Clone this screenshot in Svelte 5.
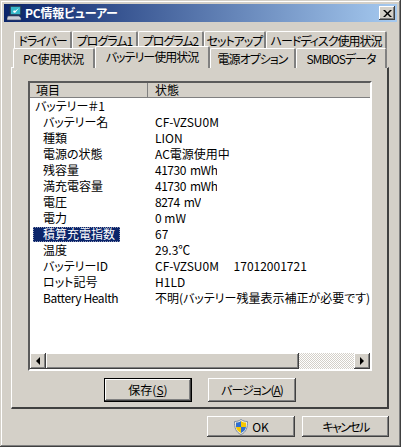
<script>
	const topTabs = ['ドライバー', 'プログラム1', 'プログラム2', 'セットアップ', 'ハードディスク使用状況'];
	const bottomTabs = ['PC使用状況', 'バッテリー使用状況', '電源オプション', 'SMBIOSデータ'];

	const rows = [
		{ name: 'バッテリー＃1', value: '', top: true },
		{ name: 'バッテリー名', value: 'CF-VZSU0M' },
		{ name: '種類', value: 'LION' },
		{ name: '電源の状態', value: 'AC電源使用中' },
		{ name: '残容量', value: '41730 mWh', tight: true },
		{ name: '満充電容量', value: '41730 mWh', tight: true },
		{ name: '電圧', value: '8274 mV', tight: true },
		{ name: '電力', value: '0 mW' },
		{ name: '積算充電指数', value: '67', selected: true },
		{ name: '温度', value: '29.3℃' },
		{ name: 'バッテリーID', value: 'CF-VZSU0M　 17012001721' },
		{ name: 'ロット記号', value: 'H1LD' },
		{ name: 'Battery Health', value: '不明(バッテリー残量表示補正が必要です)', latin: true }
	];
</script>

<div class="window">
	<header class="titlebar">
		<svg class="appicon" viewBox="0 0 15 16" width="15" height="16">
			<path d="M3 1h11v9H3z" fill="#2f6f8f" stroke="#203048" />
			<path d="M4 2h9v7H4z" fill="#35b6c8" />
			<path d="M6 7l2 1 4-5-4 3-1-1z" fill="#fff" />
			<path d="M1 11h11l2 2v2H0v-2z" fill="#c8ccd8" stroke="#404860" stroke-width="0.6" />
		</svg>
		<span class="title">PC情報ビューアー</span>
		<button class="close" aria-label="閉じる">
			<svg viewBox="0 0 9 7" width="9" height="7"><path d="M0 0h2l2.500 2.500L7 0h2L5.500 3.500 9 7H7L4.500 4.500 2 7H0l3.500-3.500z" /></svg>
		</button>
	</header>

	<div class="client">
		<div class="tabs top">
			{#each topTabs as tab}
				<div class="tab">{tab}</div>
			{/each}
		</div>
		<div class="tabs bottom">
			{#each bottomTabs as tab, i}
				<div class="tab" class:active={i === 1} class:pc={i === 0}>{tab}</div>
			{/each}
		</div>

		<section class="panel">
			<div class="list">
				<div class="head">
					<div class="hcell first">項目</div>
					<div class="hcell second">状態</div>
				</div>
				<div class="rows">
					{#each rows as row}
						<div class="row">
							<div class="name" class:top={row.top} class:latin={row.latin}>
								<span class:selected={row.selected}>{row.name}</span>
							</div>
							<div class="value" class:tight={row.tight}>{row.value}</div>
						</div>
					{/each}
				</div>
				<div class="scrollbar">
					<div class="sbtn"><i class="arrow left"></i></div>
					<div class="thumb"></div>
					<div class="track"></div>
					<div class="sbtn"><i class="arrow right"></i></div>
				</div>
			</div>
			<div class="actions">
				<button class="btn default"><span>保存(<u>S</u>)</span></button>
				<button class="btn narrow"><span>バージョン(<u>A</u>)</span></button>
			</div>
		</section>

		<footer class="footer">
			<button class="btn small">
				<svg viewBox="0 0 16 16" width="16" height="16">
					<path d="M8 .5C6 2 4 2.500 1.500 2.500c0 6 1 10.500 6.500 13 5.500-2.500 6.500-7 6.500-13C12 2.500 10 2 8 .5z" fill="#f4f0e0" stroke="#7a8aa0" />
					<path d="M8 2C6.500 3 5 3.500 3 3.600V8h5z" fill="#2f6fd0" />
					<path d="M8 2c1.500 1 3 1.500 5 1.600V8H8z" fill="#f5c800" />
					<path d="M3 8h5v6C5 12.500 3.400 10.500 3 8z" fill="#f5c800" />
					<path d="M13 8H8v6c3-1.500 4.600-3.500 5-6z" fill="#2f6fd0" />
				</svg>
				<span>OK</span>
			</button>
			<button class="btn small cancel"><span>キャンセル</span></button>
		</footer>
	</div>
</div>

<style>
	:global(body) {
		margin: 0;
		background: #d4d0c8;
	}
	.window {
		box-sizing: border-box;
		width: 401px;
		height: 447px;
		padding: 4px;
		background: #d4d0c8;
		box-shadow: inset -1px -1px #404040, inset 1px 1px #d4d0c8, inset -2px -2px #808080, inset 2px 2px #fff;
		font: 12px/16px "Noto Sans CJK JP", "Liberation Sans", sans-serif;
		font-feature-settings: "palt";
		color: #000;
	}
	.titlebar {
		display: flex;
		align-items: center;
		height: 18px;
		background: linear-gradient(90deg, #0a246a, #a6caf0);
		color: #fff;
	}
	.appicon {
		margin-left: 3px;
		margin-right: 3px;
	}
	.title {
		font-weight: 700;
		letter-spacing: -0.2px;
		flex: 1;
	}
	.close {
		display: flex;
		align-items: center;
		justify-content: center;
		box-sizing: border-box;
		width: 16px;
		height: 14px;
		margin-right: 2px;
		padding: 0;
		border: 0;
		background: #d4d0c8;
		box-shadow: inset -1px -1px #404040, inset 1px 1px #fff, inset -2px -2px #808080;
	}
	.client {
		padding: 9px 8px 0 7px;
	}
	.tabs {
		display: grid;
		position: relative;
	}
	.top {
		grid-template-columns: 58px 66px 66px 62px 121px;
		height: 17px;
		padding-left: 3px;
	}
	.top .tab {
		padding-top: 1px;
	}
	.bottom {
		grid-template-columns: 82px 115px 86px 91px;
		height: 19px;
		padding-left: 2px;
	}
	.tab {
		box-sizing: border-box;
		text-align: center;
		padding-top: 2px;
		white-space: nowrap;
		letter-spacing: -1px;
		background: #d4d0c8;
		border-top: 1px solid #fff;
		border-left: 1px solid #fff;
		border-right: 2px solid #808080;
		border-radius: 2px 2px 0 0;
	}
	.pc {
		letter-spacing: -0.4px;
	}
	.active {
		position: relative;
		z-index: 1;
		height: 22px;
		margin-top: -2px;
		border-right-color: #808080;
	}
	.panel {
		box-sizing: border-box;
		height: 342px;
		padding: 13px 15px 0 16px;
		border-top: 1px solid #fff;
		border-left: 1px solid #fff;
		border-right: 2px solid #404040;
		border-bottom: 2px solid #404040;
	}
	.list {
		box-sizing: border-box;
		height: 290px;
		display: flex;
		flex-direction: column;
		border: 2px solid;
		border-color: #5a5a5a #fff #fff #5a5a5a;
		background: #fff;
	}
	.head {
		display: flex;
		height: 15px;
		line-height: 14px;
		background: #d4d0c8;
		flex: none;
	}
	.hcell {
		box-sizing: border-box;
		padding-left: 6px;
		border-right: 1px solid #808080;
		box-shadow: inset 0 -1px #808080;
	}
	.first {
		width: 118px;
	}
	.second {
		flex: 1;
		padding-left: 7px;
		border-right: 0;
	}
	.rows {
		flex: 1;
		overflow: hidden;
	}
	.row {
		display: flex;
		height: 16px;
		white-space: nowrap;
	}
	.name {
		display: flex;
		flex: none;
		box-sizing: border-box;
		width: 118px;
		padding-left: 13px;
	}
	.name.top {
		padding-left: 5px;
	}
	.latin {
		letter-spacing: -0.4px;
	}
	.selected {
		margin: 1px 0 0 -10px;
		padding-left: 10px;
		width: 87px;
		height: 15px;
		line-height: 14px;
		box-sizing: border-box;
		background: #0a246a;
		color: #fff;
		outline: 1px dotted #8f97b5;
		outline-offset: -1px;
	}
	.value {
		padding-left: 7px;
		overflow: hidden;
	}
	.tight {
		letter-spacing: -0.5px;
		word-spacing: 2px;
	}
	.scrollbar {
		display: flex;
		flex: none;
		height: 16px;
	}
	.sbtn {
		display: flex;
		align-items: center;
		justify-content: center;
		width: 16px;
		flex: none;
		background: #d4d0c8;
		box-shadow: inset -1px -1px #404040, inset 1px 1px #fff, inset -2px -2px #808080;
	}
	.arrow {
		width: 0;
		height: 0;
		border: 4px solid transparent;
	}
	.arrow.left {
		border-right-color: #000;
		border-left-width: 0;
	}
	.arrow.right {
		border-left-color: #000;
		border-right-width: 0;
	}
	.thumb {
		width: 253px;
		flex: none;
		background: #d4d0c8;
		box-shadow: inset -1px -1px #404040, inset 1px 1px #fff, inset -2px -2px #808080;
	}
	.track {
		flex: 1;
		background: repeating-conic-gradient(#fff 0 25%, #d4d0c8 0 50%) 0 0 / 2px 2px;
	}
	.actions {
		display: flex;
		gap: 16px;
		padding: 7px 0 0 76px;
	}
	.btn {
		display: flex;
		align-items: center;
		justify-content: center;
		gap: 3px;
		box-sizing: border-box;
		width: 88px;
		height: 24px;
		padding: 0;
		border: 0;
		font: inherit;
		font-feature-settings: inherit;
		color: #000;
		background: #d4d0c8;
		box-shadow: inset -1px -1px #404040, inset 1px 1px #fff, inset -2px -2px #808080;
	}
	.narrow {
		letter-spacing: -1px;
	}
	.default {
		border: 1px solid #000;
	}
	.small {
		height: 21px;
	}
	.cancel {
		width: 87px;
		letter-spacing: -1.6px;
	}
	.footer {
		display: flex;
		justify-content: flex-end;
		gap: 7px;
		padding-top: 7px;
	}
</style>
